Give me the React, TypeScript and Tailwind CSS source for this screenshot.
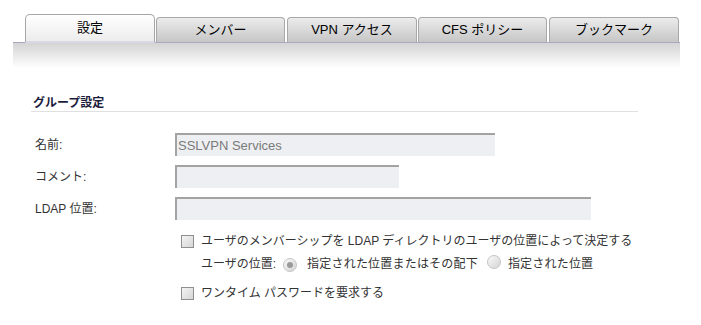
import React from "react";

const tabs = [
  { label: "設定", cls: "w-[130px]", active: true },
  { label: "メンバー", cls: "w-[129px] ml-[1px]" },
  { label: "VPN アクセス", cls: "w-[130px] ml-[2px]" },
  { label: "CFS ポリシー", cls: "w-[129px] ml-[1px]" },
  { label: "ブックマーク", cls: "w-[130px] ml-[2px]" },
];

const Checkbox = () => (
  <span className="inline-block w-[13px] h-[13px] border border-[#8f8f8f] bg-gradient-to-br from-[#f4f4f4] to-[#d6d6d6] shrink-0" />
);

const Radio = ({ checked }: { checked?: boolean }) => (
  <span className="inline-flex items-center justify-center w-[14px] h-[14px] rounded-full border border-[#c4c4c4] bg-gradient-to-br from-[#fafafa] to-[#d4d4d4] shrink-0">
    {checked && <span className="w-[6px] h-[6px] rounded-full bg-[#9a9a9a]" />}
  </span>
);

export default function App() {
  return (
    <div
      className="w-[701px] h-[325px] bg-white overflow-hidden text-[#333]"
      style={{ fontFamily: '"Liberation Sans", "Noto Sans CJK JP", sans-serif' }}
    >
      {/* Tabs */}
      <div className="pt-[14px] pl-[25px] flex items-end relative z-10">
        {tabs.map((t) =>
          t.active ? (
            <div
              key={t.label}
              className={`${t.cls} h-[29px] -mb-px rounded-t-[5px] border border-b-2 border-[#a6a6a6] border-b-[#d8d8e6] bg-gradient-to-b from-white to-[#ececec] flex items-center justify-center text-[13px] text-black`}
            >
              {t.label}
            </div>
          ) : (
            <div
              key={t.label}
              className={`${t.cls} h-[25px] rounded-t-[4px] border border-b-0 border-[#a8a8a8] bg-gradient-to-b from-[#ececec] to-[#c6c6c6] flex items-center justify-center text-[13px] text-black`}
            >
              {t.label}
            </div>
          )
        )}
      </div>
      <div className="ml-[13px] w-[667px] border-t border-[#a9a9bd] h-[26px] bg-gradient-to-b from-[#d4d4d4] to-white" />

      {/* Section */}
      <div className="pl-[31px] pt-[27px]">
        <div className="w-[607px] border-b border-[#e0e0e0] pl-[2px] text-[12px] leading-[16px] font-bold text-[#1c1c3c]">
          グループ設定
        </div>

        <div className="pl-[4px] mt-[21px] text-[12px]">
          <div className="flex items-center h-[23px]">
            <span className="w-[140px]">名前:</span>
            <div className="w-[320px] h-[23px] bg-[#eeeff2] border-t-2 border-l-2 border-[#a3a3a3] flex items-center pl-[1px] text-[13px] text-[#7a7a7a]">
              SSLVPN Services
            </div>
          </div>
          <div className="flex items-center h-[23px] mt-[9px]">
            <span className="w-[140px]">コメント:</span>
            <div className="w-[224px] h-[23px] bg-[#eeeff2] border-t-2 border-l-2 border-[#a3a3a3]" />
          </div>
          <div className="flex items-center h-[23px] mt-[9px]">
            <span className="w-[140px]">LDAP 位置:</span>
            <div className="w-[416px] h-[23px] bg-[#eeeff2] border-t-2 border-l-2 border-[#a3a3a3]" />
          </div>

          <div className="pl-[146px] mt-[12px]">
            <div className="flex items-center h-[18px] gap-[7px]">
              <Checkbox />
              <span>ユーザのメンバーシップを LDAP ディレクトリのユーザの位置によって決定する</span>
            </div>
            <div className="flex items-center h-[18px] mt-[5px] pl-[20px]">
              <span>ユーザの位置:</span>
              <span className="ml-[7px]"><Radio checked /></span>
              <span className="ml-[10px] tracking-[0.2px]">指定された位置またはその配下</span>
              <span className="ml-[9px]"><Radio /></span>
              <span className="ml-[7px] tracking-[0.2px]">指定された位置</span>
            </div>
            <div className="flex items-center h-[18px] mt-[11px] gap-[7px]">
              <Checkbox />
              <span>ワンタイム パスワードを要求する</span>
            </div>
          </div>
        </div>
      </div>
    </div>
  );
}
